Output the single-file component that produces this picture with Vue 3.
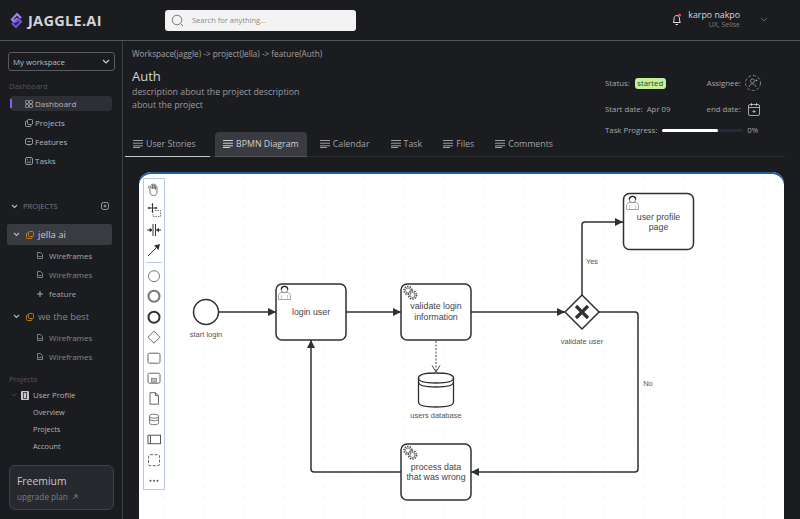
<template>
  <div class="app">
    <header class="topbar">
      <div class="brand">
        <svg width="13" height="17" viewBox="0 0 13 17" fill="none" stroke-width="2.200">
          <path d="M8 6.500 4 9.500 2 7.500 7 2 11 6" stroke="#a184f5" />
          <path d="M5 10.500 9 7.500 11 9.500 6 15 2 11" stroke="#6a4fdc" />
        </svg>
        <span>JAGGLE.AI</span>
      </div>
      <div class="search">
        <svg width="13" height="13" viewBox="0 0 13 13" fill="none" stroke="#777" stroke-width="1">
          <circle cx="6" cy="6" r="4.800" />
          <path d="M9.600 9.600 12 12" />
        </svg>
        <span>Search for anything...</span>
      </div>
      <div class="user">
        <svg width="11" height="13" viewBox="0 0 11 13" fill="none" stroke="#ddd" stroke-width="1">
          <path d="M2.300 9.500c.6-1 .7-2 .7-3.500 0-2 1-3.500 2.800-3.500S8.500 4 8.500 6c0 1.500.2 2.500.8 3.500z" />
          <path d="M4.500 11.500h2.500" />
          <circle cx="8.500" cy="2" r="1.600" fill="#e5484d" stroke="none" />
        </svg>
        <div class="user-text">
          <div class="user-name">karpo nakpo</div>
          <div class="user-role">UX, Selise</div>
        </div>
        <svg class="user-chevron" width="8" height="5" viewBox="0 0 8 5" fill="none" stroke="#666" stroke-width="1">
          <path d="M1 1l3 3 3-3" />
        </svg>
      </div>
    </header>

    <div class="body">
      <aside class="sidebar">
        <div class="workspace">
          <span>My workspace</span>
          <svg width="8" height="5" viewBox="0 0 8 5" fill="none" stroke="#ccc" stroke-width="1.200">
            <path d="M1 1l3 3 3-3" />
          </svg>
        </div>

        <div class="side-label first">Dashboard</div>
        <nav class="nav">
          <div v-for="(item, i) in navItems" :key="item" class="nav-row" :class="{ active: i === 0 }">
            <svg width="8" height="8" viewBox="0 0 8 8" fill="none" stroke="#b5b5b8" stroke-width="0.800">
              <template v-if="i === 0">
                <rect x="0.500" y="0.500" width="3" height="3" rx="0.700" />
                <rect x="4.500" y="0.500" width="3" height="3" rx="0.700" />
                <rect x="0.500" y="4.500" width="3" height="3" rx="0.700" />
                <rect x="4.500" y="4.500" width="3" height="3" rx="0.700" />
              </template>
              <template v-else-if="i === 1">
                <rect x="2.500" y="0.500" width="5" height="5" rx="1" />
                <path d="M2 2H1.500a1 1 0 0 0-1 1v3.500a1 1 0 0 0 1 1H5a1 1 0 0 0 1-1V6" />
              </template>
              <template v-else-if="i === 2">
                <rect x="0.500" y="0.500" width="7" height="6" rx="1.500" />
                <path d="M2.500 3.500h3M3 6.500l1 1 1-1" />
              </template>
              <template v-else>
                <rect x="0.500" y="0.500" width="7" height="7" rx="1.500" />
                <path d="M2 2.800h1M5 2.800h1M2 5.200h4" />
              </template>
            </svg>
            <span>{{ item }}</span>
          </div>
        </nav>

        <div class="projects-head">
          <svg class="chev" width="7" height="5" viewBox="0 0 7 5" fill="none" stroke="#bbb" stroke-width="1.100">
            <path d="M1 1l2.500 2.500L6 1" />
          </svg>
          <span>PROJECTS</span>
          <svg class="add" width="8" height="8" viewBox="0 0 8 8" fill="none" stroke="#bbb" stroke-width="0.800">
            <rect x="0.500" y="0.500" width="7" height="7" rx="2" />
            <path d="M2.500 4h3M4 2.500v3" />
          </svg>
        </div>

        <div v-for="(project, p) in projects" :key="project.name" class="project" :class="{ open: p === 0 }">
          <div class="project-row">
            <svg width="7" height="5" viewBox="0 0 7 5" fill="none" stroke="#bbb" stroke-width="1.100">
              <path d="M1 1l2.500 2.500L6 1" />
            </svg>
            <svg class="project-icon" width="8" height="8" viewBox="0 0 8 8" fill="none" stroke="#c98318" stroke-width="0.900">
              <rect x="2.500" y="0.500" width="5" height="5" rx="1" />
              <path d="M2 2H1.500a1 1 0 0 0-1 1v3.500a1 1 0 0 0 1 1H5a1 1 0 0 0 1-1V6" />
            </svg>
            <span>{{ project.name }}</span>
          </div>
          <div v-for="(child, c) in project.items" :key="c" class="child-row" :class="{ bright: p === 0 && c === 0 }">
            <svg width="6" height="7" viewBox="0 0 6 7" fill="none" stroke="#aaa" stroke-width="0.700">
              <path d="M.5.500h3l2 2v4h-5zM1.500 4.500h3" />
            </svg>
            <span>{{ child }}</span>
          </div>
          <div v-if="p === 0" class="child-row add-row">
            <svg width="6" height="6" viewBox="0 0 6 6" fill="none" stroke="#ccc" stroke-width="0.800">
              <path d="M0 3h6M3 0v6" />
            </svg>
            <span>feature</span>
          </div>
        </div>

        <div class="side-label second">Projects</div>
        <div class="profile-row">
          <svg class="chev" width="6" height="4" viewBox="0 0 6 4" fill="none" stroke="#444" stroke-width="0.900">
            <path d="M.5.500 3 3 5.500.5" />
          </svg>
          <svg width="8" height="9" viewBox="0 0 8 9">
            <rect width="8" height="9" rx="0.800" fill="#c8c8c8" />
            <rect x="2.400" y="1.500" width="3.200" height="6" fill="none" stroke="#333" stroke-width="0.800" />
          </svg>
          <span>User Profile</span>
        </div>
        <div v-for="link in profileLinks" :key="link" class="profile-link">{{ link }}</div>

        <div class="plan">
          <div class="plan-name">Freemium</div>
          <div class="plan-link">
            upgrade plan
            <svg width="6" height="6" viewBox="0 0 6 6" fill="none" stroke="#888" stroke-width="0.800">
              <path d="M1 5l4-4M2 1h3v3" />
            </svg>
          </div>
        </div>
      </aside>

      <main class="main">
        <section class="head">
          <div class="head-left">
            <div class="crumbs">Workspace(jaggle) -&gt; project(Jella) -&gt; feature(Auth)</div>
            <h1>Auth</h1>
            <p>description about the project description<br />about the project</p>
          </div>
          <div class="meta">
            <div class="meta-row status-row">
              <span class="meta-key">Status:</span>
              <span class="pill">started</span>
              <span class="meta-key second-key">Assignee:</span>
              <svg width="16" height="16" viewBox="0 0 16 16" fill="none" stroke="#aaa" stroke-width="0.700">
                <circle cx="8" cy="8" r="7.500" stroke-dasharray="3 2" />
                <circle cx="7.500" cy="6" r="2" />
                <path d="M4 12c.4-2 1.800-3 3.500-3s3 1 3.500 3M10.500 5.500h2M11.500 4.500v2" />
              </svg>
            </div>
            <div class="meta-row date-row">
              <span class="meta-key">Start date:</span>
              <span class="meta-value">Apr 09</span>
              <span class="meta-key end-key">end date:</span>
              <svg width="12" height="13" viewBox="0 0 12 13" fill="none" stroke="#ccc" stroke-width="0.800">
                <rect x="0.500" y="1.500" width="11" height="11" rx="1.500" />
                <path d="M.5 4.500h11M3.500 0v3M8.500 0v3M4.500 8.500h3M6 7v3" />
              </svg>
            </div>
            <div class="meta-row progress-row">
              <span class="meta-key">Task Progress:</span>
              <div class="bar"><div class="bar-fill" :style="{ width: progress + '%' }"></div></div>
              <span class="meta-value">0%</span>
            </div>
          </div>
        </section>

        <div class="tabs">
          <div v-for="(tab, i) in tabs" :key="tab" class="tab" :class="{ first: i === 0, current: i === 1 }">
            <svg width="10" height="8" viewBox="0 0 10 8" fill="none" stroke="currentColor" stroke-width="1">
              <path d="M0 .5h10M0 3.200h10M0 5.800h10M0 7.500h7" />
            </svg>
            <span>{{ tab }}</span>
          </div>
        </div>

        <div class="canvas">
          <svg class="diagram" width="645" height="347" viewBox="139 172 645 347" font-family="'Liberation Sans', Arial, sans-serif">
            <defs>
              <pattern id="dots" x="139" y="172" width="10" height="10" patternUnits="userSpaceOnUse">
                <circle cx="5" cy="5" r="0.600" fill="#dfe0e4" />
              </pattern>
              <marker id="head" markerWidth="9" markerHeight="9" refX="8" refY="4" orient="auto" markerUnits="userSpaceOnUse">
                <path d="M0 0 8 4 0 8z" fill="#2f3033" />
              </marker>
              <g id="gears" fill="none" stroke="#4a4a4d">
                <circle cx="5" cy="5" r="4" stroke-width="1.700" stroke-dasharray="1.400 1.100" />
                <circle cx="5" cy="5" r="2.500" stroke-width="0.700" />
                <circle cx="9.500" cy="9.500" r="4" fill="#fff" stroke-width="1.700" stroke-dasharray="1.400 1.100" />
                <circle cx="9.500" cy="9.500" r="2.500" stroke-width="0.700" />
              </g>
              <g id="person" fill="none">
                <path d="M.5 14V9.800c0-1.800 2-2.300 3.500-3h5c1.500.7 3.500 1.200 3.500 3V14z" stroke="#8c8c8f" stroke-width="0.800" />
                <path d="M3.500 9.500V14M9.500 9.500V14" stroke="#aaa" stroke-width="0.600" />
                <circle cx="6.500" cy="4" r="3.200" stroke="#666" stroke-width="0.800" fill="#fff" />
                <path d="M3.300 4a3.200 3.200 0 0 1 6.400 0" stroke="#1f1f21" stroke-width="1.300" />
              </g>
            </defs>
            <rect x="139" y="172" width="645" height="347" fill="url(#dots)" />

            <g fill="none" stroke="#2f3033" stroke-width="1.500">
              <path d="M218 312H276" marker-end="url(#head)" />
              <path d="M346 312H401" marker-end="url(#head)" />
              <path d="M471 312H565" marker-end="url(#head)" />
              <path d="M582 295V225a3 3 0 0 1 3-3H623" marker-end="url(#head)" />
              <path d="M599 312H635a3 3 0 0 1 3 3V469a3 3 0 0 1-3 3H471" marker-end="url(#head)" />
              <path d="M401 472H314a3 3 0 0 1-3-3V340" marker-end="url(#head)" />
            </g>
            <path d="M436 341V371" fill="none" stroke="#444" stroke-width="1" stroke-dasharray="2 1.500" />
            <path d="M432 365.500 436 372 440 365.500" fill="none" stroke="#444" stroke-width="1" />

            <circle cx="206" cy="312" r="12.500" fill="#fff" stroke="#2f3033" stroke-width="1.500" />

            <g fill="#fff" stroke="#2f3033" stroke-width="1.500">
              <rect x="276" y="284" width="70" height="56" rx="6" />
              <rect x="401" y="284" width="70" height="56" rx="6" />
              <rect x="623.500" y="193.500" width="70" height="56" rx="6" />
              <rect x="401" y="444" width="70" height="56" rx="6" />
              <path d="M582 295 599 312 582 329 565 312z" />
            </g>
            <path d="M576 306 588 318M588 306 576 318" stroke="#2f3033" stroke-width="3.200" />

            <use href="#person" x="278" y="285.500" />
            <use href="#person" x="626" y="195.500" />
            <use href="#gears" x="403" y="285.500" />
            <use href="#gears" x="403" y="445.500" />

            <g fill="#fff" stroke="#2f3033" stroke-width="1.300">
              <path d="M418.500 378c0-3 6-5 17.500-5s17.500 2 17.500 5v24c0 3-6 5-17.500 5s-17.500-2-17.500-5z" />
              <path d="M418.500 378c0 3 6 5 17.500 5s17.500-2 17.500-5M418.500 382c0 3 6 5 17.500 5s17.500-2 17.500-5" fill="none" />
            </g>

            <g fill="#444" font-size="8.800" text-anchor="middle">
              <text x="311" y="315">login user</text>
              <text x="436" y="309">validate login</text>
              <text x="436" y="320">information</text>
              <text x="658.500" y="220">user profile</text>
              <text x="658.500" y="230">page</text>
              <text x="436" y="470">process data</text>
              <text x="436" y="480">that was wrong</text>
            </g>
            <g fill="#555" font-size="7.500" text-anchor="middle">
              <text x="206" y="337">start login</text>
              <text x="436" y="418">users database</text>
              <text x="582" y="344">validate user</text>
              <text x="592" y="264">Yes</text>
              <text x="648" y="386">No</text>
            </g>
          </svg>

          <div class="palette">
            <svg width="20" height="20" viewBox="0 0 20 20" fill="none" stroke="#777" stroke-width="1">
              <path d="M6 10 4.500 7.500c-.6-1 .7-1.700 1.300-.8L7 8.500V5.500c0-1.200 1.500-1.200 1.500 0V9V4.800c0-1.200 1.600-1.200 1.600 0V9V5.300c0-1.200 1.500-1.200 1.500 0V9.500V7c0-1.100 1.400-1.100 1.400 0v5c0 2.500-1.500 3.500-3.500 3.500-2.500 0-3-1.500-3.500-2.500z" />
            </svg>
            <svg width="20" height="20" viewBox="0 0 20 20" fill="none" stroke="#333" stroke-width="1">
              <path d="M8.500 4v8M4.500 8h8" />
              <path d="M8 5 8.500 3.500 9 5zM8 11 8.500 12.500 9 11zM5.500 7.500 4 8 5.500 8.500zM11.500 7.500 13 8 11.500 8.500z" />
              <path d="M11 10.500h5.500v6H9v-4" stroke="#777" stroke-dasharray="1.500 1" />
            </svg>
            <svg width="20" height="20" viewBox="0 0 20 20" fill="none" stroke="#333" stroke-width="1">
              <path d="M9 4v12M11.500 4v12M3 10h3.500M14 10h3" />
              <path d="M6 8.500 8 10 6 11.500zM14.500 8.500 12.500 10 14.500 11.500z" fill="#333" />
            </svg>
            <svg width="20" height="20" viewBox="0 0 20 20" fill="none" stroke="#333" stroke-width="1">
              <path d="M4 16 13 7" />
              <path d="M16 4 14.500 10 10 5.500z" fill="#333" stroke="none" />
            </svg>
            <div class="palette-sep"></div>
            <svg class="tool" width="20" height="20" viewBox="0 0 20 20" fill="none" stroke="#777" stroke-width="1">
              <circle cx="10" cy="10" r="5.500" />
            </svg>
            <svg class="tool" width="20" height="20" viewBox="0 0 20 20" fill="none" stroke="#777" stroke-width="2">
              <circle cx="10" cy="10" r="5.500" />
            </svg>
            <svg class="tool" width="20" height="20" viewBox="0 0 20 20" fill="none" stroke="#333" stroke-width="2">
              <circle cx="10" cy="10" r="5.500" />
            </svg>
            <svg class="tool" width="20" height="20" viewBox="0 0 20 20" fill="none" stroke="#666" stroke-width="1">
              <path d="M10 4 16 10 10 16 4 10z" />
            </svg>
            <svg class="tool" width="20" height="20" viewBox="0 0 20 20" fill="none" stroke="#666" stroke-width="1">
              <rect x="4" y="5" width="12" height="10" rx="1.500" />
            </svg>
            <svg class="tool" width="20" height="20" viewBox="0 0 20 20" fill="none" stroke="#666" stroke-width="1">
              <rect x="4" y="5" width="12" height="10" rx="1.500" />
              <rect x="7.500" y="10" width="5" height="4" fill="#bbb" stroke="#666" stroke-width="0.600" />
            </svg>
            <svg class="tool" width="20" height="20" viewBox="0 0 20 20" fill="none" stroke="#666" stroke-width="1">
              <path d="M6 4.500h5.500L14.500 7.500v8.500H6zM11.500 4.500v3h3" />
            </svg>
            <svg class="tool" width="20" height="20" viewBox="0 0 20 20" fill="none" stroke="#777" stroke-width="1">
              <path d="M5.500 7c0-1.500 2-2 4.500-2s4.500.5 4.500 2v6.500c0 1.500-2 2-4.500 2s-4.500-.5-4.500-2z" />
              <path d="M5.500 7c0 1.500 2 2 4.500 2s4.500-.5 4.500-2M5.500 9.500c0 1.500 2 2 4.500 2s4.500-.5 4.500-2" />
            </svg>
            <svg class="tool" width="20" height="20" viewBox="0 0 20 20" fill="none" stroke="#555" stroke-width="1">
              <rect x="4" y="6" width="12.500" height="8.500" />
              <path d="M6.500 6v8.500" />
            </svg>
            <svg class="tool" width="20" height="20" viewBox="0 0 20 20" fill="none" stroke="#666" stroke-width="1">
              <rect x="4.500" y="4.500" width="11" height="11" rx="1.500" stroke-dasharray="3 1.500" />
            </svg>
            <svg class="tool" width="20" height="20" viewBox="0 0 20 20" fill="#555">
              <circle cx="6.500" cy="10.500" r="1" />
              <circle cx="10" cy="10.500" r="1" />
              <circle cx="13.500" cy="10.500" r="1" />
            </svg>
          </div>
        </div>
      </main>
    </div>
  </div>
</template>

<script setup>
const navItems = ['Dashboard', 'Projects', 'Features', 'Tasks']
const projects = [
  { name: 'jella ai', items: ['Wireframes', 'Wireframes'] },
  { name: 'we the best', items: ['Wireframes', 'Wireframes'] }
]
const profileLinks = ['Overview', 'Projects', 'Account']
const tabs = ['User Stories', 'BPMN Diagram', 'Calendar', 'Task', 'Files', 'Comments']
const progress = 69
</script>

<style>
html,
body {
  margin: 0;
  background: #1b1c20;
}
</style>

<style scoped>
.app {
  width: 800px;
  height: 519px;
  overflow: hidden;
  background: #1b1c20;
  color: #c4c4c6;
  font-family: "Open Sans", "Noto Sans", sans-serif;
}

.topbar {
  display: flex;
  align-items: center;
  height: 40px;
  border-bottom: 1px solid #55565a;
  box-sizing: content-box;
}

.brand {
  display: flex;
  align-items: center;
  gap: 5px;
  width: 155px;
  padding-left: 10px;
  box-sizing: border-box;
  color: #d4d4d6;
  font-size: 14.500px;
  font-weight: 700;
  letter-spacing: 0.300px;
}

.search {
  display: flex;
  align-items: center;
  gap: 8px;
  width: 191px;
  height: 21px;
  margin-left: 10px;
  padding-left: 6px;
  box-sizing: border-box;
  border-radius: 3px;
  background: #f3f3f4;
  color: #8a8a90;
  font-size: 7.500px;
}

.user {
  display: flex;
  align-items: center;
  margin-left: auto;
  padding-right: 32px;
  margin-top: -2px;
}

.user-text {
  width: 56px;
  margin-left: 2px;
  text-align: right;
}

.user-name {
  font-size: 8.800px;
  line-height: 10px;
  color: #d8d8da;
}

.user-role {
  margin-top: 1px;
  font-size: 7px;
  line-height: 8px;
  color: #7d7d82;
}

.user-chevron {
  margin-left: 20px;
}

.body {
  display: flex;
  height: 478px;
}

.sidebar {
  flex: none;
  width: 123px;
  padding-top: 11px;
  box-sizing: border-box;
  border-right: 1px solid #3c3d42;
  overflow: hidden;
}

.workspace {
  display: flex;
  align-items: center;
  justify-content: space-between;
  width: 107px;
  height: 19px;
  margin-left: 8px;
  padding: 0 4px;
  box-sizing: border-box;
  border: 1px solid #5a5b60;
  border-radius: 3px;
  font-size: 7.800px;
  font-weight: 500;
  color: #bdbdc0;
}

.side-label {
  height: 12px;
  line-height: 12px;
  margin-left: 9px;
  font-size: 7.500px;
  color: #55565b;
}

.side-label.first {
  margin-top: 9px;
}

.side-label.second {
  margin-top: 7px;
}

.nav {
  margin-top: 2px;
}

.nav-row {
  display: flex;
  align-items: center;
  gap: 2px;
  height: 19px;
  padding-left: 25px;
  font-size: 8px;
  color: #b5b5b8;
  position: relative;
}

.nav-row.active::before {
  content: "";
  position: absolute;
  z-index: 0;
  left: 10px;
  top: 2px;
  width: 102px;
  height: 15px;
  border-radius: 4px;
  background: #2e2f35;
}

.nav-row.active::after {
  content: "";
  position: absolute;
  left: 10px;
  top: 5px;
  width: 2px;
  height: 9px;
  background: #8b5cf6;
}

.nav-row svg,
.nav-row span {
  position: relative;
  z-index: 1;
}

.projects-head {
  display: flex;
  align-items: center;
  height: 14px;
  margin-top: 29px;
  padding: 0 13px 0 11px;
  font-size: 7.600px;
  color: #7a7a80;
}

.projects-head .chev {
  margin-right: 5px;
}

.projects-head .add {
  margin-left: auto;
}

.project {
  margin-top: 3px;
}

.project.open {
  margin-top: 11px;
}

.project-row {
  display: flex;
  align-items: center;
  height: 21px;
  margin: 0 10px 0 7px;
  padding-left: 6px;
  border-radius: 2px;
  font-size: 9.500px;
  color: #85858a;
}

.project.open .project-row {
  background: #3a3b40;
  color: #c8c8ca;
}

.project-icon {
  margin: 0 4px 0 6px;
}

.child-row {
  display: flex;
  align-items: center;
  gap: 6px;
  height: 19px;
  padding-left: 37px;
  font-size: 8px;
  color: #85858a;
}

.child-row.bright,
.child-row.add-row {
  color: #a5a5a8;
}

.project:not(.open) .child-row:first-of-type {
  margin-top: 2px;
}

.project-row + .child-row {
  margin-top: 1px;
}

.profile-row {
  display: flex;
  align-items: center;
  height: 16px;
  margin-top: 2px;
  padding-left: 11px;
  font-size: 7.800px;
  font-weight: 500;
  color: #b5b5b8;
}

.profile-row svg + svg {
  margin: 0 4px 0 4px;
}

.profile-link {
  height: 17px;
  line-height: 17px;
  padding-left: 33px;
  font-size: 7.300px;
  font-weight: 500;
  color: #b5b5b8;
}

.profile-row + .profile-link {
  margin-top: 1px;
}

.plan {
  width: 105px;
  height: 45px;
  margin: 10px 0 0 9px;
  padding: 8px 7px 0;
  box-sizing: border-box;
  border: 1px solid #463670;
  border-radius: 6px;
  background: #28292f;
}

.plan-name {
  font-size: 10.400px;
  line-height: 14px;
  color: #c8c8ca;
}

.plan-link {
  display: flex;
  align-items: center;
  gap: 4px;
  margin-top: 3px;
  font-size: 8.200px;
  color: #7d7d82;
}

.main {
  flex: 1;
  display: flex;
  flex-direction: column;
  min-width: 0;
}

.head {
  display: flex;
  height: 91px;
  flex: none;
}

.head-left {
  width: 473px;
  padding: 7px 0 0 9px;
  box-sizing: border-box;
}

.crumbs {
  font-size: 8.200px;
  line-height: 11px;
  color: #a0a0a4;
}

h1 {
  margin: 10px 0 0;
  font-size: 13px;
  line-height: 15px;
  font-weight: 400;
  color: #d4d4d6;
}

p {
  margin: 2px 0 0;
  font-size: 8.800px;
  line-height: 13px;
  color: #9a9a9e;
}

.meta {
  position: relative;
  flex: 1;
  padding-top: 34px;
  font-size: 7.800px;
  color: #a5a5a8;
}

.meta-row {
  display: flex;
  align-items: center;
  margin-left: 9px;
}

.status-row {
  height: 16px;
}

.date-row {
  height: 14px;
  margin-top: 11px;
}

.progress-row {
  height: 12px;
  margin-top: 8px;
}

.pill {
  margin-left: 5px;
  padding: 0 2px;
  height: 11px;
  line-height: 11px;
  border-radius: 3px;
  background: #c5ef9b;
  color: #2b4a1a;
  font-size: 7.800px;
  width: 27px;
  text-align: center;
}

.second-key {
  margin-left: 41px;
  margin-right: 4px;
}

.meta-value {
  margin-left: 4px;
}

.end-key {
  margin-left: 36px;
  margin-right: 7px;
}

.bar {
  width: 81px;
  height: 3px;
  margin-left: 5px;
  border-radius: 2px;
  background: #232a38;
}

.bar-fill {
  height: 100%;
  border-radius: 2px;
  background: #fff;
}

.tabs {
  display: flex;
  flex: none;
  height: 25px;
  margin: 0 15px 0 2px;
  gap: 5px;
  border-bottom: 1px solid #2a2b30;
  box-sizing: border-box;
}

.tab {
  display: flex;
  align-items: center;
  gap: 3px;
  height: 25px;
  padding: 0 8px;
  box-sizing: border-box;
  border-bottom: 1px solid transparent;
  font-size: 8.800px;
  color: #a0a0a4;
}

.tab.first {
  width: 85px;
  border-bottom-color: #c8c8ca;
}

.tab.current {
  border-radius: 4px 4px 0 0;
  background: #3a3b40;
  border-bottom-color: #55565a;
  color: #cfcfd1;
}

.canvas {
  position: relative;
  flex: 1;
  margin: 15px 16px 0 16px;
  overflow: hidden;
  border-radius: 12px 12px 0 0;
  background: #fff;
  box-shadow: inset 0 2px 0 #1f5da6;
}

.diagram {
  position: absolute;
  top: 0;
  left: 0;
}

.palette {
  position: absolute;
  top: 6px;
  left: 4px;
  display: flex;
  flex-direction: column;
  align-items: center;
  width: 22px;
  height: 312px;
  padding-top: 1px;
  box-sizing: border-box;
  border: 1px solid #bcc8e2;
  background: #fff;
}

.palette svg {
  display: block;
  flex: none;
}

.palette .tool {
  height: 20.400px;
}

.palette-sep {
  flex: none;
  width: 16px;
  height: 1px;
  margin: 2px 0 3px;
  background: #bcc8e2;
}
</style>
